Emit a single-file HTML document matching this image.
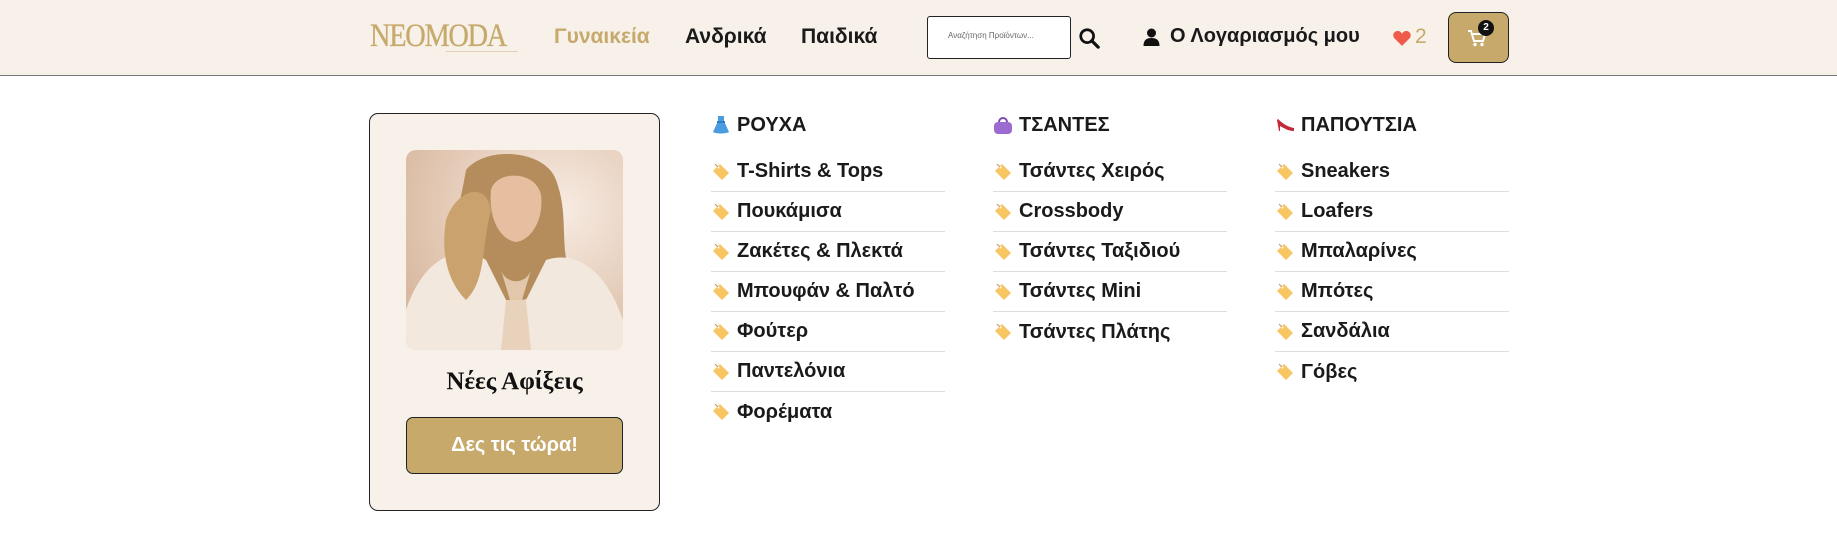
<!DOCTYPE html>
<html><head><meta charset="utf-8">
<style>
*{margin:0;padding:0;box-sizing:border-box}
body{width:1837px;height:543px;background:#fff;font-family:"Liberation Sans","DejaVu Sans",sans-serif;position:relative;overflow:hidden;color:#1a1a1a}
.hdr{position:absolute;left:0;top:0;width:1837px;height:76px;background:#f7f1ea;border-bottom:1px solid #777}
.abs{position:absolute}
.logo{left:370px;top:18px;font-family:"Liberation Serif",serif;font-size:33px;color:#c7a96c;letter-spacing:-1.5px;transform:scaleX(0.86);transform-origin:left;-webkit-text-stroke:0.3px #c7a96c}
.logoline{left:446px;top:51px;width:72px;border-top:1px solid #ddd0b5}
.nav{top:25px;font-size:21px;font-weight:bold}
.search{left:927px;top:16px;width:144px;height:43px;border:1px solid #222;border-radius:3px;background:#fff;font-size:8px;color:#666;padding:14px 0 0 20px}
.card{left:369px;top:113px;width:291px;height:398px;background:#f7f1ea;border:1px solid #222;border-radius:9px}
.btn{left:406px;top:417px;width:217px;height:57px;background:#c7a96c;border:1px solid #222;border-radius:7px;color:#fff;font-weight:bold;font-size:20px;text-align:center;line-height:55px}
.title{left:369px;width:291px;top:368px;text-align:center;font-family:"Liberation Serif",serif;font-weight:bold;font-size:25px;color:#111}
.col{position:absolute;top:111px;width:234px}
.col h3{font-size:20px;font-weight:bold;height:28px;line-height:28px;display:flex;align-items:center;gap:6px}
.col ul{list-style:none;margin-top:13px}
.col li{height:40px;border-bottom:1px solid #ddd;font-size:20px;font-weight:bold;display:flex;align-items:center;gap:6px}
.col li:last-child{border-bottom:none}
</style></head><body>
<div class="hdr"></div>
<div class="abs logo">NEOMODA</div>
<div class="abs logoline"></div>
<div class="abs nav" style="left:554px;color:#c7a96c">Γυναικεία</div>
<div class="abs nav" style="left:685px">Ανδρικά</div>
<div class="abs nav" style="left:801px">Παιδικά</div>
<div class="abs search">Αναζήτηση Προϊόντων...</div>
<svg class="abs" style="left:1078px;top:27px" width="22" height="22" viewBox="0 0 24 24"><circle cx="10" cy="10" r="7" fill="none" stroke="#111" stroke-width="3"/><path d="M15 15l7 7" stroke="#111" stroke-width="3.5" stroke-linecap="round"/></svg>
<svg class="abs" style="left:1143px;top:28px" width="17" height="18" viewBox="0 0 16 18"><circle cx="8" cy="5" r="4.5" fill="#111"/><path d="M0 18c0-6 3-8 8-8s8 2 8 8z" fill="#111"/></svg>
<div class="abs nav" style="left:1170px;top:25px;font-size:20px">Ο Λογαριασμός μου</div>
<svg class="abs" style="left:1393px;top:30px" width="18" height="16" viewBox="0 0 24 21"><path d="M12 21L2 11C-1 8 0 2 6 1c3 0 5 2 6 4 1-2 3-4 6-4 6 1 7 7 4 10z" fill="#ef5a4b"/></svg>
<div class="abs" style="left:1415px;top:25px;font-size:21px;color:#c7a96c">2</div>
<div class="abs" style="left:1448px;top:12px;width:61px;height:51px;background:#c7a96c;border:1px solid #222;border-radius:8px"></div>
<svg class="abs" style="left:1467px;top:29px" width="20" height="18" viewBox="0 0 20 18"><path d="M1 2h3l3 10h9l2-7H6" fill="none" stroke="#fff" stroke-width="2"/><circle cx="8" cy="15.5" r="1.7" fill="#fff"/><circle cx="15" cy="15.5" r="1.7" fill="#fff"/></svg>
<div class="abs" style="left:1478px;top:20px;width:16px;height:16px;border-radius:50%;background:#111;color:#fff;font-size:10px;font-weight:bold;text-align:center;line-height:16px">2</div>

<div class="abs card"></div>
<svg class="abs" style="left:406px;top:150px" width="217" height="200" viewBox="0 0 217 200">
<defs><clipPath id="c"><rect width="217" height="200" rx="10"/></clipPath>
<radialGradient id="bg" cx="0.7" cy="0.3" r="0.8"><stop offset="0" stop-color="#f8ece3"/><stop offset="1" stop-color="#d9b9a0"/></radialGradient></defs>
<g clip-path="url(#c)">
<rect width="217" height="200" fill="url(#bg)"/>
<path d="M60 20 C80 -5 140 0 150 30 C165 70 150 100 170 140 L60 160 C30 120 50 80 60 20Z" fill="#b58d5c"/>
<path d="M0 160 C20 100 60 95 80 110 L110 170 L140 110 C170 100 200 120 217 170 L217 200 L0 200Z" fill="#f3e8dd"/>
<path d="M85 40 C90 20 130 20 135 45 C138 70 125 90 110 92 C95 90 82 70 85 40Z" fill="#e6bea0"/>
<path d="M95 120 L110 170 L125 120 C120 135 100 135 95 120Z" fill="#e2c7ab"/>
<path d="M100 150 L120 150 L125 200 L95 200Z" fill="#e8d2bb"/>
<path d="M40 70 C50 40 80 30 85 60 C75 100 80 130 60 150 C40 130 35 100 40 70Z" fill="#c9a26e"/>
</g></svg>
<div class="abs title">Νέες Αφίξεις</div>
<div class="abs btn">Δες τις τώρα!</div>

<svg width="0" height="0" style="position:absolute"><defs>
<symbol id="tag" viewBox="0 0 20 20"><path d="M3 8 L9 2 L18 11 L11 18 L2 9Z" fill="#f7c562"/><path d="M4 2 L7 5" stroke="#c98a50" stroke-width="1"/><circle cx="7.5" cy="5.5" r="1" fill="#fff"/></symbol>
</defs></svg>

<div class="col" style="left:711px">
<h3><svg width="20" height="20" viewBox="0 0 20 20"><path d="M7 1h6v5l5 11c-3 2-13 2-16 0l5-11z" fill="#4a9be0"/><rect x="6" y="6" width="8" height="2" fill="#2f7ec4"/></svg>ΡΟΥΧΑ</h3>
<ul>
<li><svg width="20" height="20"><use href="#tag"/></svg>T-Shirts &amp; Tops</li>
<li><svg width="20" height="20"><use href="#tag"/></svg>Πουκάμισα</li>
<li><svg width="20" height="20"><use href="#tag"/></svg>Ζακέτες &amp; Πλεκτά</li>
<li><svg width="20" height="20"><use href="#tag"/></svg>Μπουφάν &amp; Παλτό</li>
<li><svg width="20" height="20"><use href="#tag"/></svg>Φούτερ</li>
<li><svg width="20" height="20"><use href="#tag"/></svg>Παντελόνια</li>
<li><svg width="20" height="20"><use href="#tag"/></svg>Φορέματα</li>
</ul></div>
<div class="col" style="left:993px">
<h3><svg width="20" height="20" viewBox="0 0 20 20"><path d="M6 7 a4 4 0 0 1 8 0" fill="none" stroke="#7a4db0" stroke-width="2"/><rect x="1" y="7" width="18" height="12" rx="4" fill="#9b6bd1"/></svg>ΤΣΑΝΤΕΣ</h3>
<ul>
<li><svg width="20" height="20"><use href="#tag"/></svg>Τσάντες Χειρός</li>
<li><svg width="20" height="20"><use href="#tag"/></svg>Crossbody</li>
<li><svg width="20" height="20"><use href="#tag"/></svg>Τσάντες Ταξιδιού</li>
<li><svg width="20" height="20"><use href="#tag"/></svg>Τσάντες Mini</li>
<li><svg width="20" height="20"><use href="#tag"/></svg>Τσάντες Πλάτης</li>
</ul></div>
<div class="col" style="left:1275px">
<h3><svg width="20" height="20" viewBox="0 0 20 20"><path d="M2 5 L4 16 L5 16 L5 11 C9 13 13 16 19 16 L19 13 C13 12 8 9 3 4Z" fill="#c4263a"/></svg>ΠΑΠΟΥΤΣΙΑ</h3>
<ul>
<li><svg width="20" height="20"><use href="#tag"/></svg>Sneakers</li>
<li><svg width="20" height="20"><use href="#tag"/></svg>Loafers</li>
<li><svg width="20" height="20"><use href="#tag"/></svg>Μπαλαρίνες</li>
<li><svg width="20" height="20"><use href="#tag"/></svg>Μπότες</li>
<li><svg width="20" height="20"><use href="#tag"/></svg>Σανδάλια</li>
<li><svg width="20" height="20"><use href="#tag"/></svg>Γόβες</li>
</ul></div>
</body></html>
